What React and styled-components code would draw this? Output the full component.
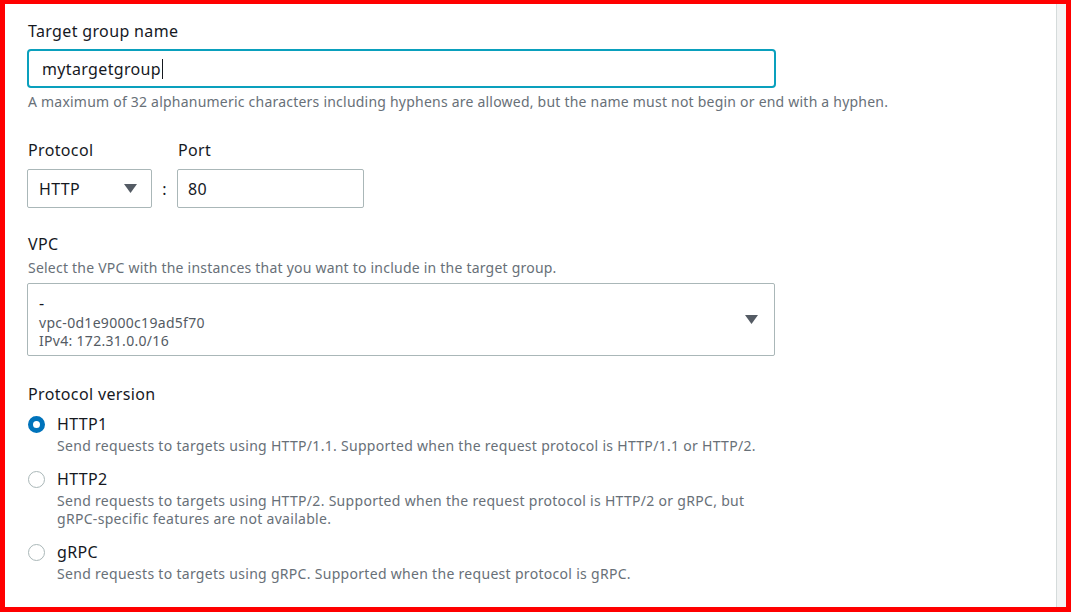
import React from "react";
import styled, { createGlobalStyle } from "styled-components";

const Global = createGlobalStyle`
  html, body { margin: 0; padding: 0; background: #ffffff; }
  body { font-family: "Noto Sans", "Open Sans", Arial, sans-serif; color: #16191f; }
  * { box-sizing: border-box; }
`;

const Frame = styled.div`
  width: 1071px;
  height: 612px;
  border-style: solid;
  border-color: #ff0000;
  border-width: 4px 5px 5px 5px;
  display: flex;
  overflow: hidden;
`;

const Panel = styled.div`
  flex: 1;
  background: #ffffff;
  padding: 16px 0 0 22px;
  display: flex;
  flex-direction: column;
`;

const SideStrip = styled.div`
  width: 10px;
  background: #f2f3f3;
  border-left: 1px solid #d5dbdb;
`;

const Field = styled.div`
  display: flex;
  flex-direction: column;
  margin-top: ${(p) => p.$mt || 0}px;
`;

const Label = styled.div`
  font-size: 16px;
  line-height: 22px;
  letter-spacing: 0.35px;
  color: #16191f;
  padding-left: 1px;
`;

const Hint = styled.div`
  font-size: 14px;
  line-height: 20px;
  letter-spacing: 0.22px;
  color: #687078;
  margin-top: ${(p) => p.$mt || 0}px;
  padding-left: 1px;
`;

const TextInput = styled.div`
  margin-top: ${(p) => p.$mt || 0}px;
  width: ${(p) => p.$w}px;
  height: 39px;
  border: ${(p) => (p.$focus ? "2px solid #0aa0bd" : "1px solid #aab7b8")};
  border-radius: ${(p) => (p.$focus ? 4 : 2)}px;
  display: flex;
  align-items: center;
  padding-left: ${(p) => (p.$focus ? 13 : 10)}px;
  font-size: 16px;
  letter-spacing: 0.35px;
  color: #16191f;
`;

const Cursor = styled.span`
  display: inline-block;
  width: 1px;
  height: 20px;
  background: #16191f;
  margin-left: 1px;
`;

const Row = styled.div`
  display: flex;
  align-items: flex-end;
  margin-top: ${(p) => p.$mt || 0}px;
`;

const Colon = styled.div`
  width: 25px;
  height: 39px;
  display: flex;
  align-items: center;
  justify-content: center;
  font-size: 16px;
  color: #16191f;
`;

const SelectBox = styled.div`
  width: ${(p) => p.$w}px;
  height: ${(p) => p.$h || 39}px;
  border: 1px solid #aab7b8;
  border-radius: 2px;
  display: flex;
  align-items: center;
  justify-content: space-between;
  padding: 0 ${(p) => p.$pr || 14}px 0 11px;
  margin-top: ${(p) => p.$mt || 0}px;
`;

const SelectText = styled.div`
  font-size: 16px;
  letter-spacing: 0.35px;
  color: #16191f;
`;

const VpcLines = styled.div`
  display: flex;
  flex-direction: column;
  padding-top: 2px;
`;

const VpcName = styled.div`
  font-size: 16px;
  line-height: 22px;
  color: #16191f;
`;

const VpcMeta = styled.div`
  font-size: 14px;
  line-height: 18px;
  letter-spacing: 0.3px;
  color: #545b64;
`;

const Caret = () => (
  <svg width="13" height="9" viewBox="0 0 13 9">
    <polygon points="0,0 13,0 6.5,9" fill="#545b64" />
  </svg>
);

const RadioGroup = styled.div`
  display: flex;
  flex-direction: column;
  margin-top: 8px;
`;

const RadioItem = styled.div`
  display: flex;
  align-items: flex-start;
  margin-top: ${(p) => p.$mt || 0}px;
`;

const RadioCircle = styled.div`
  width: 17px;
  height: 17px;
  margin-top: 3px;
  border-radius: 50%;
  flex-shrink: 0;
  border: ${(p) => (p.$checked ? "5px solid #0073bb" : "1.5px solid #aab7b8")};
  background: #ffffff;
  margin-left: 1px;
`;

const RadioText = styled.div`
  display: flex;
  flex-direction: column;
  margin-left: 12px;
`;

const RadioLabel = styled.div`
  font-size: 16px;
  line-height: 22px;
  letter-spacing: 0.35px;
  color: #16191f;
`;

const RadioDesc = styled.div`
  font-size: 14px;
  line-height: 18px;
  letter-spacing: 0.3px;
  margin-top: 2px;
  color: #687078;
  max-width: 700px;
`;

const options = [
  {
    id: "HTTP1",
    checked: true,
    desc: "Send requests to targets using HTTP/1.1. Supported when the request protocol is HTTP/1.1 or HTTP/2.",
  },
  {
    id: "HTTP2",
    desc: "Send requests to targets using HTTP/2. Supported when the request protocol is HTTP/2 or gRPC, but gRPC-specific features are not available.",
  },
  {
    id: "gRPC",
    desc: "Send requests to targets using gRPC. Supported when the request protocol is gRPC.",
  },
];

export default function App() {
  return (
    <>
      <Global />
      <Frame>
        <Panel>
          <Field>
            <Label>Target group name</Label>
            <TextInput $focus $w={749} $mt={7}>
              mytargetgroup
              <Cursor />
            </TextInput>
            <Hint $mt={4}>
              A maximum of 32 alphanumeric characters including hyphens are allowed, but the name must not begin or end
              with a hyphen.
            </Hint>
          </Field>

          <Row $mt={27}>
            <Field>
              <Label>Protocol</Label>
              <SelectBox $w={125} $mt={8}>
                <SelectText>HTTP</SelectText>
                <Caret />
              </SelectBox>
            </Field>
            <Colon>:</Colon>
            <Field>
              <Label>Port</Label>
              <TextInput $w={187} $mt={8}>
                80
              </TextInput>
            </Field>
          </Row>

          <Field $mt={25}>
            <Label>VPC</Label>
            <Hint $mt={3}>Select the VPC with the instances that you want to include in the target group.</Hint>
            <SelectBox $w={748} $h={73} $mt={5} $pr={16}>
              <VpcLines>
                <VpcName>-</VpcName>
                <VpcMeta>vpc-0d1e9000c19ad5f70</VpcMeta>
                <VpcMeta>IPv4: 172.31.0.0/16</VpcMeta>
              </VpcLines>
              <Caret />
            </SelectBox>
          </Field>

          <Field $mt={27}>
            <Label>Protocol version</Label>
            <RadioGroup>
              {options.map((o, i) => (
                <RadioItem key={o.id} $mt={i === 0 ? 0 : 13}>
                  <RadioCircle $checked={o.checked} />
                  <RadioText>
                    <RadioLabel>{o.id}</RadioLabel>
                    <RadioDesc>{o.desc}</RadioDesc>
                  </RadioText>
                </RadioItem>
              ))}
            </RadioGroup>
          </Field>
        </Panel>
        <SideStrip />
      </Frame>
    </>
  );
}
